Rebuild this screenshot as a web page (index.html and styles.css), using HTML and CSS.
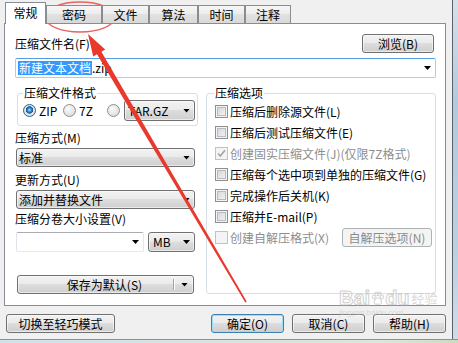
FILE: index.html
```html
<!DOCTYPE html>
<html lang="zh-CN">

<head>
	<meta charset="UTF-8">
	<meta name="viewport" content="width=device-width, initial-scale=1.0">
	<title>压缩文件名和参数</title>
	<link rel="stylesheet" href="styles.css">
</head>

<body>
	<div class="screen">
		<div class="main">
			<div class="dialog">
				<div class="tabs">
					<div class="tab active">常规</div>
					<div class="tab">密码</div>
					<div class="tab">文件</div>
					<div class="tab">算法</div>
					<div class="tab">时间</div>
					<div class="tab">注释</div>
				</div>

				<div class="panel">
					<div class="file-row">
						<span>压缩文件名(F)</span>
						<button class="btn btn-browse">浏览(B)</button>
					</div>
					<div class="combo edit focus file-name"><span class="sel">新建文本文档</span><span>.zip</span><i class="caret"></i></div>

					<div class="cols">
						<div class="col-left">
							<fieldset class="group group-format">
								<legend>压缩文件格式</legend>
								<div class="radio-row">
									<div class="radio-item zip"><span class="radio on"></span>ZIP</div>
									<div class="radio-item seven"><span class="radio"></span>7Z</div>
									<div class="radio-item"><span class="radio"></span></div>
									<div class="combo list tar">TAR.GZ<i class="caret"></i></div>
								</div>
							</fieldset>

							<div class="field-label method">压缩方式(M)</div>
							<div class="combo list wide">标准<i class="caret"></i></div>

							<div class="field-label update">更新方式(U)</div>
							<div class="combo list wide">添加并替换文件<i class="caret"></i></div>

							<div class="field-label split-size">压缩分卷大小设置(V)</div>
							<div class="size-row">
								<div class="combo edit size"><i class="caret"></i></div>
								<div class="combo list unit">MB<i class="caret"></i></div>
							</div>

							<div class="btn split">
								<span class="split-label">保存为默认(S)</span>
								<span class="split-sep"></span>
								<i class="caret"></i>
							</div>
						</div>

						<fieldset class="group group-options">
							<legend>压缩选项</legend>
							<div class="check"><span class="box"></span>压缩后删除源文件(L)</div>
							<div class="check"><span class="box"></span>压缩后测试压缩文件(E)</div>
							<div class="check disabled"><span class="box"><svg viewBox="0 0 11 11" width="11" height="11"><path d="M2 5.5 L4.3 8 L9 2.2" stroke="#a3a3a3" stroke-width="1.6" fill="none"/></svg></span>创建固实压缩文件(J)(仅限7Z格式)</div>
							<div class="check"><span class="box"></span>压缩每个选中项到单独的压缩文件(G)</div>
							<div class="check"><span class="box"></span>完成操作后关机(K)</div>
							<div class="check"><span class="box"></span>压缩并E-mail(P)</div>
							<div class="check disabled"><span class="box"></span>创建自解压格式(X)<button class="btn btn-disabled sfx">自解压选项(N)</button></div>
						</fieldset>
					</div>
				</div>

				<div class="footer">
					<button class="btn btn-mode">切换至轻巧模式</button>
					<button class="btn btn-ok">确定(O)</button>
					<button class="btn btn-std">取消(C)</button>
					<button class="btn btn-std">帮助(H)</button>
				</div>
			</div>
			<div class="window-edge"></div>
		</div>
		<div class="bottom-edge"></div>

		<div class="watermark">
			<div class="wm-logo">Bai<svg class="paw" viewBox="0 0 20 20" width="15" height="15"><g fill="none" stroke="#b9b9b9" stroke-width="1.4"><ellipse cx="5" cy="8" rx="2" ry="2.6"/><ellipse cx="8.5" cy="4" rx="2" ry="2.6"/><ellipse cx="12.5" cy="4" rx="2" ry="2.6"/><ellipse cx="16" cy="8" rx="2" ry="2.6"/><path d="M10.5 9 C7 9 5 14 6 16.5 C7 18.5 9 17.5 10.5 17.5 C12 17.5 14 18.5 15 16.5 C16 14 14 9 10.5 9 Z"/></g></svg>du<span class="wm-cn">经验</span></div>
			<div class="wm-url">jingyan.baidu.com</div>
		</div>

		<svg class="annot" width="458" height="343" viewBox="0 0 458 343">
			<ellipse cx="80" cy="17" rx="35" ry="15" fill="none" stroke="#e9625e" stroke-width="1.3"/>
			<polygon points="88,34 105.2,49.4 101.4,51.7 246.7,301.6 245.3,302.4 97,54.3 93.2,56.6" fill="#e8392c"/>
		</svg>
	</div>
</body>

</html>
```

FILE: styles.css
```css
* {
	box-sizing: border-box;
}

body {
	margin: 0;
	font: 12px/14px "Noto Sans CJK SC", "Liberation Sans", sans-serif;
	color: #000;
}

.screen {
	position: relative;
	width: 458px;
	height: 343px;
	overflow: hidden;
	display: flex;
	flex-direction: column;
	background: #f0f0f0;
}

.main {
	display: flex;
	height: 339px;
}

.dialog {
	width: 452px;
	padding-top: 2px;
}

.window-edge {
	flex: 1;
	border-left: 1px solid #59636d;
	background: linear-gradient(#d6e1ea, #b3c9dd 30%, #bcd0e1 75%, #cfdce8);
}

.bottom-edge {
	height: 4px;
	border-top: 1px solid #7397ba;
	background: linear-gradient(to right, #cfe1ec, #d9e8d6 85%, #c9dcc0);
}

/* onglets */
.tabs {
	position: relative;
	z-index: 1;
	display: flex;
	align-items: flex-end;
	height: 21px;
	padding-left: 5px;
}

.tab {
	height: 18px;
	padding-top: 2px;
	border: 1px solid #898c95;
	border-bottom: 0;
	background: linear-gradient(#f6f6f6, #ececec 50%, #e1e1e1 50%, #d9d9d9);
	text-align: center;
}

.tab.active {
	height: 22px;
	margin-bottom: -1px;
	padding-top: 3px;
	background: #fff;
}

.tab:nth-child(1) { width: 41px; }
.tab:nth-child(2) { width: 56px; }
.tab:nth-child(3) { width: 47px; }
.tab:nth-child(4) { width: 49px; }
.tab:nth-child(5) { width: 47px; }
.tab:nth-child(6) { width: 46px; }

/* panneau */
.panel {
	margin-left: 4px;
	width: 442px;
	height: 283px;
	padding: 10px 9px 0 10px;
	border: 1px solid #898c95;
	background: #fff;
}

.file-row {
	display: flex;
	justify-content: space-between;
	align-items: center;
	height: 19px;
}

/* boutons */
.btn {
	display: flex;
	align-items: center;
	justify-content: center;
	height: 19px;
	padding: 0;
	border: 1px solid #707070;
	border-radius: 3px;
	background: linear-gradient(#f2f2f2, #ebebeb 45%, #dddddd 50%, #cfcfcf);
	box-shadow: inset 0 0 0 1px rgba(255, 255, 255, 0.55);
	font: inherit;
	color: #000;
}

.btn-browse {
	width: 72px;
	margin-right: 2px;
}

.btn-disabled {
	border-color: #adb2b5;
	background: #f4f4f4;
	box-shadow: none;
	color: #8b8b8b;
}

.btn-ok {
	border-color: #3c7fb1;
	box-shadow: inset 0 0 0 1px #9fdcf7;
}

/* listes déroulantes */
.combo {
	display: flex;
	align-items: center;
	height: 19px;
	padding-left: 3px;
	border-radius: 2px;
}

.combo.edit {
	border: 1px solid #abadb3;
	border-color: #abadb3 #e3e9ef #e3e9ef #e2e3ea;
	background: #fff;
}

.combo.focus {
	border-color: #569de5 #a8cdf0 #a8cdf0 #a8cdf0;
}

.combo.list {
	border: 1px solid #707070;
	border-radius: 3px;
	background: linear-gradient(#f2f2f2, #ebebeb 45%, #dddddd 50%, #cfcfcf);
	box-shadow: inset 0 0 0 1px rgba(255, 255, 255, 0.55);
}

.caret {
	flex: none;
	width: 7px;
	height: 4px;
	margin-left: auto;
	margin-right: 4px;
	background: #000;
	clip-path: polygon(0 0, 100% 0, 50% 100%);
}

.file-name {
	height: 20px;
	margin-top: 5px;
	padding-left: 2px;
}

.sel {
	padding: 0 1px;
	background: #3399ff;
	color: #fff;
}

/* colonnes */
.cols {
	display: flex;
	align-items: flex-start;
}

.col-left {
	width: 183px;
}

.group {
	margin: 0;
	border: 1px solid #d5dfe5;
	border-radius: 3px;
}

.group legend {
	padding: 0 1px;
	line-height: 14px;
}

.group-format {
	width: 181px;
	margin: 8px 0 0 2px;
	padding: 0 2px 4px 5px;
}

.radio-row {
	display: flex;
	align-items: center;
	height: 21px;
}

.radio-item {
	display: flex;
	align-items: center;
	gap: 3px;
}

.radio-item.zip {
	width: 40px;
}

.radio-item.seven {
	width: 44px;
}

.radio {
	width: 13px;
	height: 13px;
	border: 1px solid #8e8f8f;
	border-radius: 50%;
	background: radial-gradient(circle at 40% 35%, #fbfbfb, #d4d4d4);
}

.radio.on {
	border-color: #2c628b;
	background: radial-gradient(circle at 50% 45%, #bfe6ff 0, #3b9ae0 1.6px, #14558f 3.4px, #e6e6e6 4px, #d9d9d9);
}

.combo.tar {
	width: 71px;
	height: 21px;
	margin-left: 4px;
}

.field-label {
	line-height: 14px;
}

.field-label.method {
	margin-top: 5px;
}

.field-label.update {
	margin-top: 6px;
}

.field-label.split-size {
	margin-top: 3px;
}

.combo.wide {
	width: 179px;
	margin: 3px 0 0 1px;
	padding-left: 2px;
}

.size-row {
	display: flex;
	gap: 4px;
	margin: 6px 0 0 1px;
}

.combo.size {
	width: 128px;
	height: 20px;
}

.combo.unit {
	width: 47px;
	height: 20px;
	padding-left: 4px;
}

.split {
	width: 177px;
	margin: 23px 0 0 2px;
	justify-content: flex-start;
}

.split-label {
	flex: 1;
	padding-left: 18px;
	text-align: center;
}

.split-sep {
	width: 1px;
	height: 11px;
	background: #fff;
	border-left: 1px solid #a0a0a0;
	box-sizing: content-box;
}

.split .caret {
	margin: 0 5px 0 6px;
}

/* options */
.group-options {
	width: 230px;
	margin: 8px 0 0 8px;
	padding: 1px 3px 45px 8px;
}

.group-options legend {
	margin-left: -1px;
}

.check {
	display: flex;
	align-items: center;
	gap: 2px;
	height: 21px;
	white-space: nowrap;
}

.box {
	display: flex;
	align-items: center;
	justify-content: center;
	flex: none;
	width: 13px;
	height: 13px;
	border: 1px solid #8f8f8f;
	background: linear-gradient(135deg, #cfd2d6, #f7f7f7);
	box-shadow: inset 0 0 0 1px #f4f4f4, inset 0 0 0 2px #b7bbc0;
}

.check.disabled {
	color: #8d8d8d;
}

.check.disabled .box {
	border-color: #c2c2c2;
	background: #f4f4f4;
	box-shadow: none;
}

.sfx {
	width: 90px;
	margin-left: auto;
}

/* boutons du bas */
.footer {
	display: flex;
	gap: 8px;
	margin-top: 8px;
	padding: 0 6px;
}

.btn-mode {
	width: 109px;
	margin-right: auto;
}

.btn-ok,
.btn-std {
	width: 73px;
}

/* filigrane et annotation */
.watermark {
	position: absolute;
	left: 339px;
	top: 288px;
	opacity: 0.6;
	pointer-events: none;
}

.wm-logo {
	display: flex;
	align-items: center;
	font: bold 20px/20px "Liberation Sans", sans-serif;
	color: rgba(255, 255, 255, 0.7);
	-webkit-text-stroke: 1px #b4b4b4;
}

.wm-cn {
	margin-left: 2px;
	font: 13px/16px "Noto Sans CJK SC", sans-serif;
	color: #c4c4c4;
	-webkit-text-stroke: 0;
}

.wm-url {
	font: 8px/9px "Liberation Sans", sans-serif;
	color: #c8c8c8;
}

.annot {
	position: absolute;
	left: 0;
	top: 0;
	pointer-events: none;
}
```
